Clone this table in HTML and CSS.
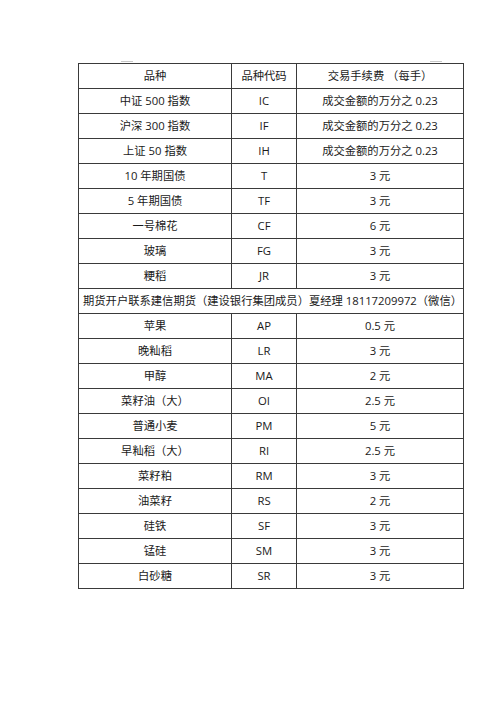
FILE: index.html
```html
<!DOCTYPE html>
<html lang="zh">
<head>
<meta charset="utf-8">
<link rel="stylesheet" href="styles.css">
</head>
<body>
<div class="page">
  <div class="marks"><span class="mark"></span><span class="mark"></span></div>
  <table class="fees">
    <colgroup><col class="c1"><col class="c2"><col class="c3"></colgroup>
    <tr><td>品种</td><td>品种代码</td><td>交易手续费 （每手）</td></tr>
    <tr><td>中证 500 指数</td><td>IC</td><td>成交金额的万分之 0.23</td></tr>
    <tr><td>沪深 300 指数</td><td>IF</td><td>成交金额的万分之 0.23</td></tr>
    <tr><td>上证 50 指数</td><td>IH</td><td>成交金额的万分之 0.23</td></tr>
    <tr><td>10 年期国债</td><td>T</td><td>3 元</td></tr>
    <tr><td>5 年期国债</td><td>TF</td><td>3 元</td></tr>
    <tr><td>一号棉花</td><td>CF</td><td>6 元</td></tr>
    <tr><td>玻璃</td><td>FG</td><td>3 元</td></tr>
    <tr><td>粳稻</td><td>JR</td><td>3 元</td></tr>
    <tr><td colspan="3" class="note">期货开户联系建信期货（建设银行集团成员）夏经理 18117209972（微信）</td></tr>
    <tr><td>苹果</td><td>AP</td><td>0.5 元</td></tr>
    <tr><td>晚籼稻</td><td>LR</td><td>3 元</td></tr>
    <tr><td>甲醇</td><td>MA</td><td>2 元</td></tr>
    <tr><td>菜籽油（大）</td><td>OI</td><td>2.5 元</td></tr>
    <tr><td>普通小麦</td><td>PM</td><td>5 元</td></tr>
    <tr><td>早籼稻（大）</td><td>RI</td><td>2.5 元</td></tr>
    <tr><td>菜籽粕</td><td>RM</td><td>3 元</td></tr>
    <tr><td>油菜籽</td><td>RS</td><td>2 元</td></tr>
    <tr><td>硅铁</td><td>SF</td><td>3 元</td></tr>
    <tr><td>锰硅</td><td>SM</td><td>3 元</td></tr>
    <tr><td>白砂糖</td><td>SR</td><td>3 元</td></tr>
  </table>
</div>
</body>
</html>
```
FILE: styles.css
```css
html, body {
  margin: 0;
  padding: 0;
  background: #fff;
}
.page {
  padding: 61px 0 0 78px;
  font-family: "Open Sans", "Noto Sans CJK SC", sans-serif;
  font-size: 11.3px;
  color: #1a1a1a;
}
.marks {
  display: flex;
  height: 1px;
  padding-left: 43px;
  gap: 297px;
}
.mark {
  width: 12px;
  height: 1px;
  background: #c8c8c8;
}
.fees {
  margin-top: 1px;
  border-collapse: collapse;
  table-layout: fixed;
  width: 385px;
}
.c1 { width: 153px; }
.c2 { width: 65px; }
.c3 { width: 167px; }
.fees td {
  border: 1px solid #3a3a3a;
  height: 24px;
  padding: 0;
  text-align: center;
  vertical-align: middle;
  line-height: 14px;
  white-space: nowrap;
}
.fees td.note {
  text-align: left;
  padding-left: 4px;
}
```
